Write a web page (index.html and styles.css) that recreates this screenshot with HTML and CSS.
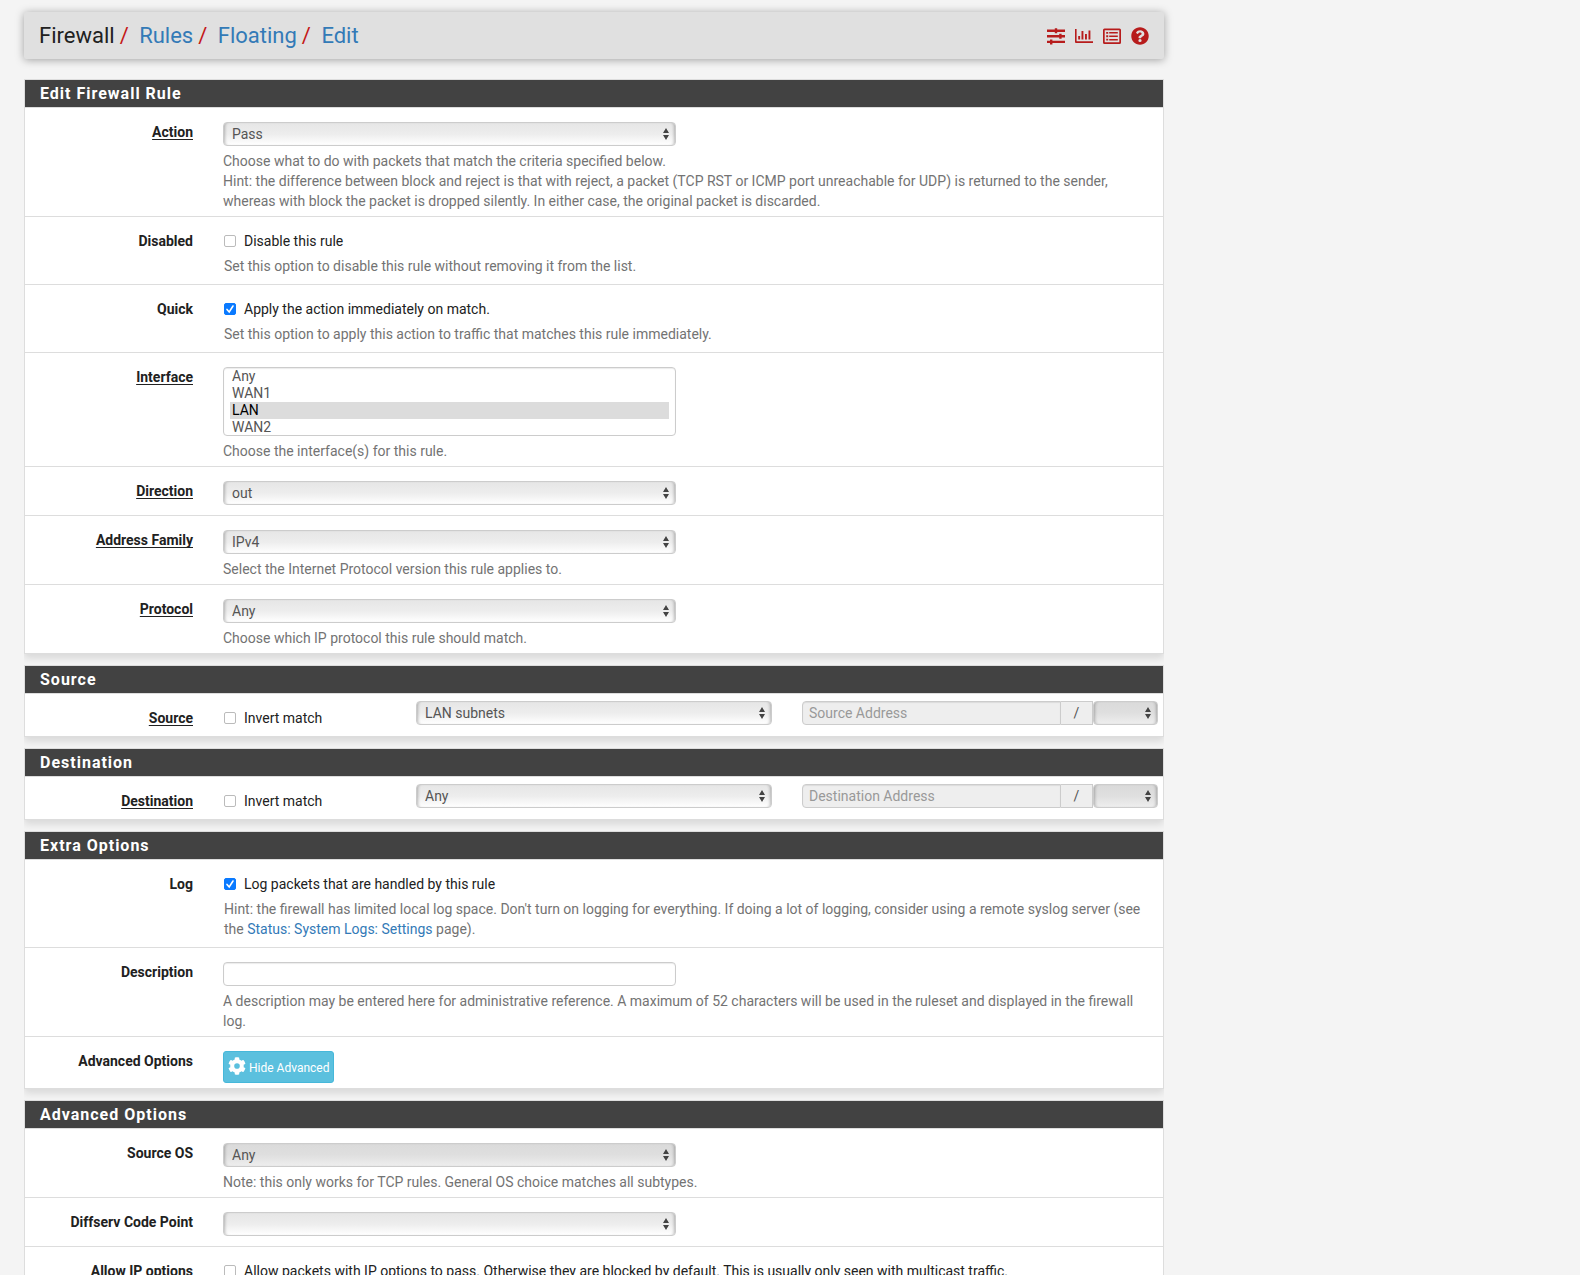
FILE: index.html
```html
<!DOCTYPE html>
<html lang="en">
<head>
<meta charset="utf-8">
<title>Firewall: Rules: Floating: Edit</title>
<link rel="stylesheet" href="styles.css">
</head>
<body>
<div class="container">
  <header class="header">
    <ol class="breadcrumb">
      <li>Firewall</li>
      <li><a href="#rules">Rules</a></li>
      <li><a href="#floating">Floating</a></li>
      <li><a href="#edit">Edit</a></li>
    </ol>
    <nav class="context-links" aria-label="Related pages">
      <a href="#settings" aria-label="Related settings"><svg class="icon" viewBox="0 0 18 18"><path d="M0 2.5h7.8V1.2h2.4v1.3H18V5h-7.8v1.2H7.800V5H0zM0 8h12.200V6.800h2.400V8H18v2.500h-3.400v1.300h-2.400v-1.300H0zM0 13.700h3v-1.300h2.400v1.300H18v2.400H5.400v1.300H3v-1.300H0z"/></svg></a>
      <a href="#status" aria-label="Related status"><svg class="icon" viewBox="0 0 18 18"><path d="M0 2h1.600v12.300H18V16H1Q0 16 0 15zM3.200 9h1.900v3.500H3.200zM6.500 4h1.900v8.500H6.500zM10 7h1.900v5.500H10zM13.500 3.500h1.900v9h-1.900z"/></svg></a>
      <a href="#log" aria-label="Related log entries"><svg class="icon" viewBox="0 0 18 18"><path fill-rule="evenodd" d="M1.500 1.500h15q1.500 0 1.500 1.500v12.500q0 1.500-1.500 1.500h-15Q0 17 0 15.500V3q0-1.500 1.500-1.500zM1.700 3.200v12.100h14.600V3.200zM3.200 4.900h2v1.900h-2zM6.200 5h8.600v1.600H6.200zM3.200 8.300h2v1.900h-2zM6.200 8.500h8.600v1.600H6.200zM3.200 11.700h2v1.900h-2zM6.200 11.900h8.600v1.600H6.200z"/></svg></a>
      <a href="#help" aria-label="Help"><svg class="icon" viewBox="0 0 512 512"><path d="M504 256c0 137-111 248-248 248S8 393 8 256 119 8 256 8s248 111 248 248zM262 90c-54 0-89 23-116 64-4 5-3 12 3 16l34 26c6 4 13 3 17-2 18-23 30-36 57-36 21 0 46 13 46 33 0 15-12 23-33 34-24 14-56 31-56 73v7c0 7 5 12 12 12h56c7 0 12-5 12-12v-4c0-29 86-31 86-110 0-60-62-101-118-101zm-6 248a46 46 0 1 0 0 92 46 46 0 0 0 0-92z"/></svg></a>
    </nav>
  </header>

  <form>
    <section class="panel">
      <h2 class="panel-heading">Edit Firewall Rule</h2>
      <div class="row">
        <label class="name required" for="action"><span>Action</span></label>
        <div class="field">
          <select class="control short" id="action"><option>Pass</option></select>
          <p class="help">Choose what to do with packets that match the criteria specified below.<br>Hint: the difference between block and reject is that with reject, a packet (TCP RST or ICMP port unreachable for UDP) is returned to the sender, whereas with block the packet is dropped silently. In either case, the original packet is discarded.</p>
        </div>
      </div>
      <div class="row">
        <span class="name">Disabled</span>
        <div class="field check-field">
          <label class="check"><input type="checkbox">Disable this rule</label>
          <p class="help">Set this option to disable this rule without removing it from the list.</p>
        </div>
      </div>
      <div class="row">
        <span class="name">Quick</span>
        <div class="field check-field">
          <label class="check"><input type="checkbox" checked>Apply the action immediately on match.</label>
          <p class="help">Set this option to apply this action to traffic that matches this rule immediately.</p>
        </div>
      </div>
      <div class="row">
        <label class="name required" for="interface"><span>Interface</span></label>
        <div class="field">
          <select class="list short" id="interface" multiple size="4"><option>Any</option><option>WAN1</option><option selected>LAN</option><option>WAN2</option></select>
          <p class="help">Choose the interface(s) for this rule.</p>
        </div>
      </div>
      <div class="row">
        <label class="name required" for="direction"><span>Direction</span></label>
        <div class="field no-help">
          <select class="control short" id="direction"><option>out</option></select>
        </div>
      </div>
      <div class="row">
        <label class="name required" for="family"><span>Address Family</span></label>
        <div class="field">
          <select class="control short" id="family"><option>IPv4</option></select>
          <p class="help">Select the Internet Protocol version this rule applies to.</p>
        </div>
      </div>
      <div class="row">
        <label class="name required" for="protocol"><span>Protocol</span></label>
        <div class="field">
          <select class="control short" id="protocol"><option>Any</option></select>
          <p class="help">Choose which IP protocol this rule should match.</p>
        </div>
      </div>
    </section>

    <section class="panel">
      <h2 class="panel-heading">Source</h2>
      <div class="row">
        <label class="name required" for="source"><span>Source</span></label>
        <div class="invert"><label class="check"><input type="checkbox">Invert match</label></div>
        <div class="network"><select class="control" id="source"><option>LAN subnets</option></select></div>
        <div class="address">
          <input class="control" type="text" placeholder="Source Address" aria-label="Source address" disabled>
          <span class="addon">/</span>
          <select class="control" aria-label="Source mask" disabled><option></option></select>
        </div>
      </div>
    </section>

    <section class="panel">
      <h2 class="panel-heading">Destination</h2>
      <div class="row">
        <label class="name required" for="destination"><span>Destination</span></label>
        <div class="invert"><label class="check"><input type="checkbox">Invert match</label></div>
        <div class="network"><select class="control" id="destination"><option>Any</option></select></div>
        <div class="address">
          <input class="control" type="text" placeholder="Destination Address" aria-label="Destination address" disabled>
          <span class="addon">/</span>
          <select class="control" aria-label="Destination mask" disabled><option></option></select>
        </div>
      </div>
    </section>

    <section class="panel">
      <h2 class="panel-heading">Extra Options</h2>
      <div class="row">
        <span class="name">Log</span>
        <div class="field check-field">
          <label class="check"><input type="checkbox" checked>Log packets that are handled by this rule</label>
          <p class="help">Hint: the firewall has limited local log space. Don't turn on logging for everything. If doing a lot of logging, consider using a remote syslog server (see the <a href="#logs">Status: System Logs: Settings</a> page).</p>
        </div>
      </div>
      <div class="row">
        <label class="name" for="description">Description</label>
        <div class="field">
          <input class="control short" id="description" type="text">
          <p class="help">A description may be entered here for administrative reference. A maximum of 52 characters will be used in the ruleset and displayed in the firewall log.</p>
        </div>
      </div>
      <div class="row">
        <span class="name">Advanced Options</span>
        <div class="field">
          <button class="button" type="button"><svg class="icon" viewBox="0 0 512 512"><path fill-rule="evenodd" d="M487 316l-42-25c4-23 4-47 0-70l42-25c5-3 7-9 6-14-11-36-30-68-55-95-4-4-10-5-15-2l-42 24c-18-15-39-27-61-35V25c0-6-4-11-9-12-37-8-74-8-110 0-5 1-9 6-9 12v49c-22 8-43 20-61 35L89 85c-5-3-11-2-15 2-25 27-44 59-55 95-2 5 1 11 5 14l43 25c-5 23-5 47 0 70l-43 25c-4 3-7 9-5 14 11 36 30 68 55 95 4 4 10 5 15 2l42-24c18 15 39 27 61 35v49c0 6 4 11 9 12 37 8 74 8 110 0 5-1 9-6 9-12v-49c22-8 43-20 61-35l42 24c5 3 11 2 15-2 25-27 44-59 55-95 1-5-1-11-6-14zM256 336a80 80 0 1 1 0-160 80 80 0 0 1 0 160z"/></svg><span>Hide Advanced</span></button>
        </div>
      </div>
    </section>

    <section class="panel">
      <h2 class="panel-heading">Advanced Options</h2>
      <div class="row">
        <label class="name" for="os">Source OS</label>
        <div class="field">
          <select class="control short" id="os" disabled><option>Any</option></select>
          <p class="help">Note: this only works for TCP rules. General OS choice matches all subtypes.</p>
        </div>
      </div>
      <div class="row">
        <label class="name" for="dscp">Diffserv Code Point</label>
        <div class="field no-help">
          <select class="control short" id="dscp"><option></option></select>
        </div>
      </div>
      <div class="row">
        <span class="name">Allow IP options</span>
        <div class="field check-field">
          <label class="check"><input type="checkbox">Allow packets with IP options to pass. Otherwise they are blocked by default. This is usually only seen with multicast traffic.</label>
        </div>
      </div>
    </section>
  </form>
</div>
</body>
</html>
```
FILE: styles.css
```css
*,
*::before {
  box-sizing: border-box;
}

body {
  height: 100vh;
  margin: 0;
  overflow: hidden;
  background: #f4f4f4;
  color: #212121;
  font: 14px/20px Roboto, "Liberation Sans", sans-serif;
}

a {
  color: #337ab7;
  text-decoration: none;
}

.container {
  max-width: 1188px;
  padding: 12px 24px;
}

.icon {
  display: block;
  width: 18px;
  height: 18px;
  fill: currentColor;
}

/* Page header */
.header {
  display: flex;
  align-items: center;
  justify-content: space-between;
  height: 47px;
  margin-bottom: 20px;
  padding: 1px 15px 0;
  border-radius: 2px;
  background: #e0e0e0;
  box-shadow: 0 1px 8px rgba(0, 0, 0, 0.35);
}

.breadcrumb {
  display: flex;
  margin: 0;
  padding: 0;
  list-style: none;
  font-size: 22px;
  line-height: 24px;
}

.breadcrumb li + li::before {
  content: "/\00a0";
  padding: 0 5px;
  color: #c41818;
}

.context-links {
  display: flex;
  gap: 10px;
}

.context-links a {
  color: #b71c1c;
}

/* Panels */
.panel {
  margin-bottom: 11px;
  border: 1px solid #ddd;
  background: #fff;
  box-shadow: 0 4px 8px rgba(0, 0, 0, 0.12);
  clip-path: inset(0 0 -11px 0);
}

.panel-heading {
  margin: 0;
  padding: 4px 15px 3px;
  background: #424242;
  color: #fff;
  font-size: 16px;
  font-weight: 700;
  line-height: 20px;
  letter-spacing: 1px;
}

.row {
  display: grid;
  grid-template-columns: repeat(12, minmax(0, 1fr));
  margin: 0 -10px;
  border-top: 1px solid #ddd;
}

.name {
  grid-column: span 2;
  padding: 14px 15px 0;
  font-weight: 700;
  text-align: right;
}

.required span {
  text-decoration: underline 1px;
  text-decoration-skip-ink: none;
  text-underline-offset: 2px;
}

.field {
  grid-column: span 10;
  padding: 14px 25px 5px 15px;
}

.no-help {
  padding-bottom: 10px;
}

.check-field {
  padding: 14px 25px 8px 16px;
}

.help {
  margin: 5px 0 0;
  color: #737373;
}

/* Form controls */
.control,
.list {
  display: block;
  width: 100%;
  height: 24px;
  margin: 0;
  border: 1px solid #ccc;
  border-radius: 4px;
  background-color: #fff;
  color: #555;
  font: inherit;
  box-shadow: inset 0 1px 1px rgba(0, 0, 0, 0.08);
}

.short {
  width: calc(50% - 10px);
}

input.control {
  padding: 0 6px;
}

input.control:disabled {
  background: #eee;
}

input.control::placeholder {
  color: #999;
}

select.control {
  padding: 0 8px;
  appearance: none;
  background-image:
    url("data:image/svg+xml,%3Csvg xmlns='http://www.w3.org/2000/svg' width='6' height='12'%3E%3Cpath fill='%23444' d='M3 0L6 5H0zM0 7h6L3 12z'/%3E%3C/svg%3E"),
    linear-gradient(#e6e6e6, #ededed 50%, #fff);
  background-position: right 6px center, 0 0;
  background-repeat: no-repeat;
  box-shadow: inset 3px 0 3px -2px rgba(0, 0, 0, 0.25), inset -3px 0 3px -2px rgba(0, 0, 0, 0.25);
}

select.control:disabled {
  background-image:
    url("data:image/svg+xml,%3Csvg xmlns='http://www.w3.org/2000/svg' width='6' height='12'%3E%3Cpath fill='%23444' d='M3 0L6 5H0zM0 7h6L3 12z'/%3E%3C/svg%3E"),
    linear-gradient(#dadada, #dfdfdf 50%, #eee);
  opacity: 1;
}

.list {
  height: 69px;
  padding: 0 6px;
  overflow: hidden;
}

.list option {
  height: 17px;
  min-height: 17px;
  padding: 0 2px;
  line-height: 17px;
}

.list option:checked {
  background: linear-gradient(#dcdcdc, #dcdcdc);
  color: #000;
}

.check {
  display: flex;
  align-items: center;
  gap: 8px;
}

.check input {
  flex: none;
  width: 12px;
  height: 12px;
  margin: 0;
  appearance: none;
  border: 1px solid #bbb;
  border-radius: 2px;
  background: #fff;
}

.check input:checked {
  border-color: #0a7aff;
  background: #0a7aff url("data:image/svg+xml,%3Csvg xmlns='http://www.w3.org/2000/svg' viewBox='0 0 10 10'%3E%3Cpath fill='none' stroke='white' stroke-width='1.6' stroke-linecap='round' d='M2 5.4L4.2 8L8 2'/%3E%3C/svg%3E");
}

/* Address rows */
.invert {
  grid-column: span 2;
  padding: 14px 0 8px 16px;
}

.network {
  grid-column: span 4;
  padding: 7px 15px 0;
}

.address {
  display: flex;
  grid-column: span 4;
  padding: 7px 15px 0;
}

.address input.control {
  flex: 1;
  min-width: 0;
  border-radius: 4px 0 0 4px;
}

.address select.control {
  flex: none;
  width: 65px;
}

.addon {
  flex: none;
  width: 32px;
  height: 24px;
  border: 1px solid #ccc;
  border-left: 0;
  background: #eee;
  color: #555;
  line-height: 22px;
  text-align: center;
}

.button {
  display: flex;
  align-items: center;
  gap: 3px;
  height: 32px;
  padding: 2px 4px 0;
  border: 1px solid #46b8da;
  border-radius: 3px;
  background: #5bc0de;
  color: #fff;
  font: 12px/18px Roboto, "Liberation Sans", sans-serif;
}

.button .icon {
  margin-bottom: 4px;
}
```
